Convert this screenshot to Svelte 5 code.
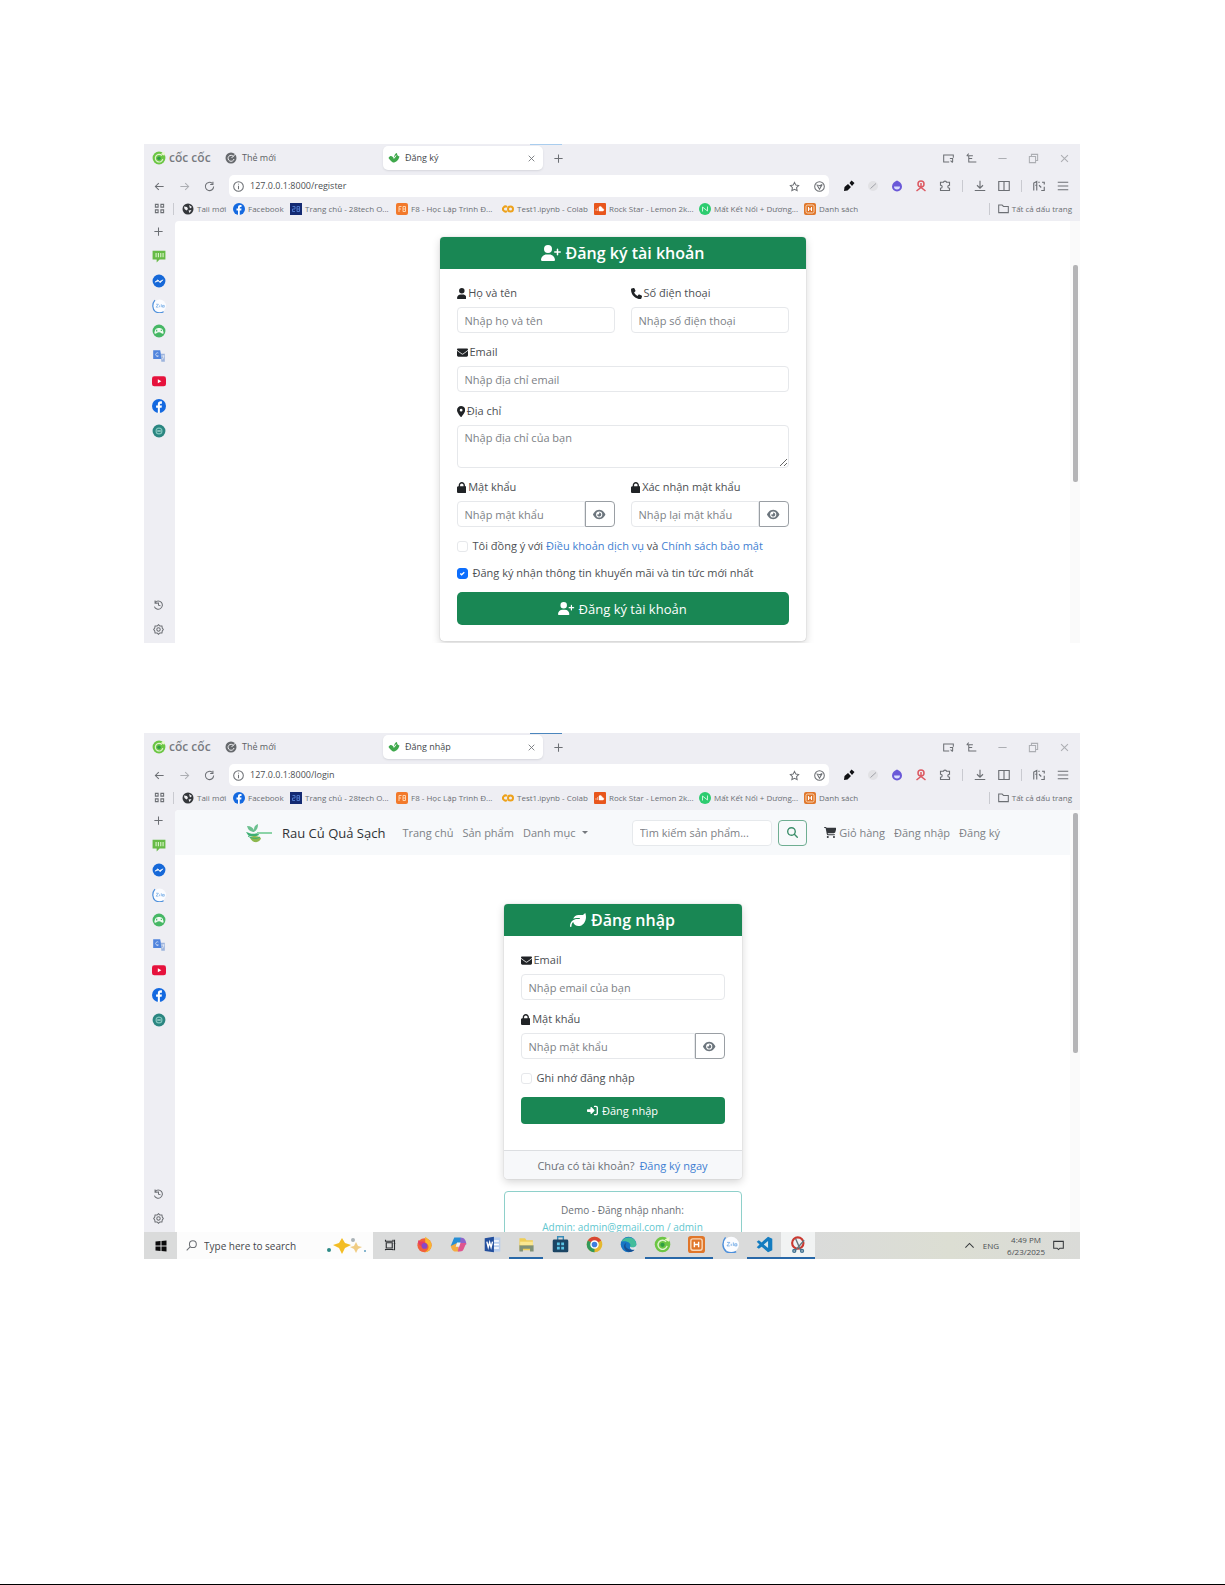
<script lang="ts">
    import type { Snippet } from "svelte";

    // solid glyphs: [viewBox width, path], all on a 512 high box
    const glyphs: Record<string, [number, string]> = {
        user: [448, "M224 256A128 128 0 1 0 224 0a128 128 0 1 0 0 256zm-45.7 48C79.8 304 0 383.8 0 482.3C0 498.7 13.3 512 29.7 512l388.6 0c16.4 0 29.7-13.3 29.7-29.7C448 383.8 368.2 304 269.7 304l-91.4 0z"],
        userPlus: [640, "M96 128a128 128 0 1 1 256 0A128 128 0 1 1 96 128zM0 482.3C0 383.8 79.8 304 178.3 304l91.4 0C368.2 304 448 383.8 448 482.3c0 16.4-13.3 29.7-29.7 29.7L29.7 512C13.3 512 0 498.7 0 482.3zM504 312l0-64-64 0c-13.3 0-24-10.7-24-24s10.7-24 24-24l64 0 0-64c0-13.3 10.7-24 24-24s24 10.7 24 24l0 64 64 0c13.3 0 24 10.7 24 24s-10.7 24-24 24l-64 0 0 64c0 13.3-10.7 24-24 24s-24-10.7-24-24z"],
        phone: [512, "M164.9 24.6c-7.7-18.6-28-28.5-47.4-23.2l-88 24C12.1 30.2 0 46 0 64C0 311.4 200.6 512 448 512c18 0 33.8-12.1 38.6-29.5l24-88c5.3-19.4-4.6-39.7-23.2-47.4l-96-40c-16.3-6.8-35.2-2.1-46.3 11.6L304.7 368C234.3 334.7 177.3 277.7 144 207.3L193.3 167c13.7-11.2 18.4-30 11.6-46.3l-40-96z"],
        envelope: [512, "M48 64C21.5 64 0 85.5 0 112c0 15.1 7.1 29.3 19.2 38.4L236.8 313.6c11.4 8.5 27 8.5 38.4 0L492.8 150.4c12.1-9.1 19.2-23.3 19.2-38.4c0-26.5-21.5-48-48-48L48 64zM0 176L0 384c0 35.3 28.7 64 64 64l384 0c35.3 0 64-28.7 64-64l0-208L294.4 339.2c-22.8 17.1-54 17.1-76.8 0L0 176z"],
        pin: [384, "M215.7 499.2C267 435 384 279.4 384 192C384 86 298 0 192 0S0 86 0 192c0 87.4 117 243 168.3 307.2c12.3 15.3 35.1 15.3 47.4 0zM192 128a64 64 0 1 1 0 128 64 64 0 1 1 0-128z"],
        lock: [448, "M144 144l0 48 160 0 0-48c0-44.2-35.8-80-80-80s-80 35.8-80 80zM80 192l0-48C80 64.5 144.5 0 224 0s144 64.5 144 144l0 48 16 0c35.3 0 64 28.7 64 64l0 192c0 35.3-28.7 64-64 64L64 512c-35.3 0-64-28.7-64-64L0 256c0-35.3 28.7-64 64-64l16 0z"],
        eye: [576, "M288 32c-80.8 0-145.5 36.8-192.6 80.6C48.6 156 17.3 208 2.5 243.7c-3.3 7.9-3.3 16.7 0 24.6C17.3 304 48.6 356 95.4 399.4C142.5 443.2 207.2 480 288 480s145.5-36.8 192.6-80.6c46.8-43.5 78.1-95.4 93-131.1c3.3-7.9 3.3-16.7 0-24.6c-14.9-35.7-46.2-87.7-93-131.1C433.5 68.8 368.8 32 288 32zM144 256a144 144 0 1 1 288 0 144 144 0 1 1 -288 0zm144-64c0 35.3-28.7 64-64 64c-7.1 0-13.9-1.2-20.3-3.3c-5.5-1.8-11.9 1.6-11.7 7.4c.3 6.9 1.3 13.8 3.2 20.7c13.7 51.2 66.4 81.6 117.6 67.9s81.6-66.4 67.9-117.6c-11.1-41.5-47.8-69.4-88.6-71.1c-5.8-.2-9.2 6.1-7.4 11.7c2.1 6.4 3.3 13.2 3.3 20.3z"],
        leaf: [512, "M272 96c-78.6 0-145.1 51.5-167.7 122.5c33.6-17 71.5-26.5 111.7-26.5l88 0c8.8 0 16 7.2 16 16s-7.2 16-16 16l-88 0c-16.6 0-32.7 1.9-48.3 5.4c-25.9 5.9-49.9 16.4-71.4 30.7C38.3 298.8 0 364.9 0 440l0 16c0 13.3 10.7 24 24 24s24-10.7 24-24l0-16c0-48.7 20.7-92.5 53.8-123.2C121.6 392.3 190.3 448 272 448l1 0c132.1-.7 239-130.9 239-291.4c0-42.6-7.5-83.1-21.1-119.6c-2.6-6.9-12.7-6.6-16.2-.1C455.9 72.1 418.7 96 376 96L272 96z"],
        cart: [576, "M0 24C0 10.7 10.7 0 24 0L69.5 0c22 0 41.5 12.8 50.6 32l411 0c26.3 0 45.5 25 38.6 50.4l-41 152.3c-8.5 31.4-37 53.3-69.5 53.3l-288.5 0 5.4 28.5c2.2 11.3 12.1 19.5 23.6 19.5L488 336c13.3 0 24 10.7 24 24s-10.7 24-24 24l-288.3 0c-34.6 0-64.3-24.6-70.7-58.5L77.4 54.5c-.7-3.8-4-6.5-7.9-6.5L24 48C10.7 48 0 37.3 0 24zM128 464a48 48 0 1 1 96 0 48 48 0 1 1 -96 0zm336-48a48 48 0 1 1 0 96 48 48 0 1 1 0-96z"],
        search: [512, "M416 208c0 45.9-14.9 88.3-40 122.7L502.6 457.4c12.5 12.5 12.5 32.8 0 45.3s-32.8 12.5-45.3 0L330.7 376c-34.4 25.2-76.8 40-122.7 40C93.1 416 0 322.9 0 208S93.1 0 208 0S416 93.1 416 208zM208 352a144 144 0 1 0 0-288 144 144 0 1 0 0 288z"],
        signIn: [512, "M217.9 105.9L340.7 228.7c7.2 7.2 11.3 17.1 11.3 27.3s-4.1 20.1-11.3 27.3L217.9 406.1c-6.4 6.4-15 9.9-24 9.9c-18.7 0-33.9-15.2-33.9-33.9l0-62.1L32 320c-17.7 0-32-14.3-32-32l0-64c0-17.7 14.3-32 32-32l128 0 0-62.1c0-18.7 15.2-33.9 33.9-33.9c9 0 17.6 3.6 24 9.9zM352 416l64 0c17.7 0 32-14.3 32-32l0-256c0-17.7-14.3-32-32-32l-64 0c-17.7 0-32-14.3-32-32s14.3-32 32-32l64 0c53 0 96 43 96 96l0 256c0 53-43 96-96 96l-64 0c-17.7 0-32-14.3-32-32s14.3-32 32-32z"],
    };

    // thin line icons of the browser frame, on a 16 box
    const lines: Record<string, string> = {
        back: "M14 8H2M7 3L2 8l5 5",
        forward: "M2 8h12M9 3l5 5-5 5",
        reload: "M14 8a6 6 0 1 1-2-4.5M13 1v4H9",
        info: "M8 1a7 7 0 1 0 0 14a7 7 0 1 0 0-14M8 7v5M8 4v1",
        star: "M8 2l2 4 4 .6-3 3 .8 4.4L8 12l-3.8 2L5 9.6l-3-3L6 6z",
        shield: "M8 1a7 7 0 1 0 0 14a7 7 0 1 0 0-14M4 5l4 7 4-7M6 6l3 1 2-2",
        puzzle: "M2 3h4c0-2 4-2 4 0h4v4c-3 0-3 4 0 4v3H2v-3c3 0 3-4 0-4z",
        download: "M8 1v9M4 7l4 4 4-4M1 14h14",
        split: "M1 2h14v12H1zM8 2v12",
        devices: "M1 14V4l4-2v12M7 3h2M12 3h3v3M15 9v5h-4M8 7l3 3M3 7h2",
        menu: "M1 3h14M1 8h14M1 13h14",
        cast: "M9 13H1V3h14v4M10 8h4v5M11 11l3 3",
        pinTab: "M1 4h9M4 4v9h11M4 8h5M1 4l3-3",
        minimize: "M2 8h12",
        restore: "M2 5h9v9H2zM5 5V2h9v9h-3",
        close: "M3 3l10 10M13 3L3 13",
        plus: "M8 2v12M2 8h12",
        apps: "M2 2h4v4H2zM10 2h4v4h-4zM2 10h4v4H2zM10 10h4v4h-4z",
        folder: "M1 3h5l2 2h7v9H1z",
        history: "M3 2v4h4M3 5a6 6 0 1 1-1 6M8 5v4l3 1",
        gear: "M8 1l2 2 3 0 .5 3L15 8l-1.5 2L13 13l-3 0-2 2-2-2-3 0-.5-3L1 8l1.5-2L3 3l3 0zM8 5.5a2.5 2.5 0 1 0 0 5a2.5 2.5 0 1 0 0-5",
        taskView: "M3 5h8v7H3zM2 1v2h10V1M2 15v-1h10v1M14 1v14M13 6h2",
        find: "M10 1a5 5 0 1 0 0 10a5 5 0 1 0 0-10M6 10l-5 5",
        up: "M2 11l6-6 6 6",
        note: "M1 2h14v10h-5l-2 2-2-2H1z",
    };

    const bookmarks = [
        { icon: "globe", text: "Taii mới", width: 51 },
        { icon: "facebook", text: "Facebook", width: 57 },
        { icon: "tech", text: "Trang chủ - 28tech O...", width: 106 },
        { icon: "f8", text: "F8 - Học Lập Trình Đ...", width: 106 },
        { icon: "colab", text: "Test1.ipynb - Colab", width: 92 },
        { icon: "cloud", text: "Rock Star - Lemon 2k...", width: 105 },
        { icon: "music", text: "Mất Kết Nối + Dương...", width: 105 },
        { icon: "xampp", text: "Danh sách", width: 60 },
    ];

    const sideApps = ["chat", "messenger", "zalo", "game", "translate", "youtube", "facebook", "teal"];

    const tasks = [
        { icon: "firefox" },
        { icon: "copilot" },
        { icon: "word" },
        { icon: "explorer", open: true },
        { icon: "store" },
        { icon: "chrome" },
        { icon: "edge" },
        { icon: "coccoc", open: true },
        { icon: "xampp", open: true },
        { icon: "zalo" },
        { icon: "vscode", open: true },
        { icon: "snip", open: true, active: true },
    ];
</script>

{#snippet glyph(name: string)}
    <svg class="glyph" viewBox="0 0 {glyphs[name][0]} 512" aria-hidden="true"><path d={glyphs[name][1]} /></svg>
{/snippet}

{#snippet line(name: string)}
    <svg class="line" viewBox="0 0 16 16" aria-hidden="true"><path d={lines[name]} /></svg>
{/snippet}

{#snippet brand(name: string)}
    <svg class="brand" viewBox="0 0 24 24" aria-hidden="true">
        {#if name === "coccoc"}
            <circle cx="12" cy="12" r="11" fill="#6cc644" />
            <path d="M17 8a6.5 6.5 0 1 0 1.500 6" fill="none" stroke="#dff3cf" stroke-width="2" />
            <circle cx="12" cy="12.5" r="3" fill="#2f9e44" />
            <path d="M15 5l7-4-1 7z" fill="#e9f8c9" />
        {:else if name === "newtab"}
            <circle cx="12" cy="12" r="11" fill="#66696d" />
            <path d="M17 9a6 6 0 1 0 1 5M13 12l8-8" fill="none" stroke="#f2f2f5" stroke-width="2" />
        {:else if name === "sprout"}
            <path d="M1 12C5 5 9 8 12 13C12 6 14 3 18 2c0 4 1 6 5 7-2 7-6 12-13 12-3-1-6-5-9-9z" fill="#3fa84c" />
            <path d="M12 13l4-6" stroke="#fff" stroke-width="2" />
        {:else if name === "globe"}
            <circle cx="12" cy="12" r="11" fill="#34373b" />
            <path d="M4 7l6 1 2 4-3 3-4-3zM14 4l6 4-4 3zM13 15l6-1-4 6z" fill="#f2f2f5" />
        {:else if name === "facebook"}
            <circle cx="12" cy="12" r="12" fill="#1469e0" />
            <path d="M10 24v-9H7v-4h3V9c0-3.5 2-5 5-5h2v4h-2c-1 0-1.5.5-1.5 1.5V11H17l-.5 4h-3v9z" fill="#fff" />
        {:else if name === "tech"}
            <rect width="24" height="24" fill="#142a72" />
            <path d="M5 7h5v5H5v5h5M14 7h5v10h-5zM14 12h5" fill="none" stroke="#4d76c9" stroke-width="2" />
        {:else if name === "f8"}
            <rect width="24" height="24" rx="4" fill="#f2792b" />
            <path d="M6 18V7h5M6 12h4M14 7h5v10h-5zM14 12h5" fill="none" stroke="#ffd4ad" stroke-width="2" />
        {:else if name === "colab"}
            <g fill="none" stroke="#eda21c" stroke-width="4">
                <path d="M10 8a5 5 0 1 0 0 8" />
                <circle cx="17" cy="12" r="5" />
            </g>
        {:else if name === "cloud"}
            <rect width="24" height="24" rx="2" fill="#e8561c" />
            <path d="M4 16v-4M7 16v-6M10 16V8c4-2 6 0 6 3 4-1 5 5 1 5z" fill="#fff" stroke="#fff" />
        {:else if name === "music"}
            <circle cx="12" cy="12" r="12" fill="#2dcc70" />
            <path d="M7 17V8l10 8V7" fill="none" stroke="#c9f5da" stroke-width="2" />
        {:else if name === "xampp"}
            <rect width="24" height="24" rx="4" fill="#e0762a" />
            <rect x="4" y="4" width="16" height="16" rx="3" fill="none" stroke="#f8d6b6" stroke-width="2" />
            <path d="M9 8v8M15 8v8M9 12h6" fill="none" stroke="#fff" stroke-width="2" />
        {:else if name === "chat"}
            <path d="M1 3h22v15H13l-5 5v-5H1z" fill="#66bb46" />
            <path d="M7 7v7M11 7v7M15 7v7M19 7v7" stroke="#d4f2c4" stroke-width="2" />
        {:else if name === "messenger"}
            <circle cx="12" cy="12" r="11" fill="#1668d8" />
            <path d="M5 14l5-4 3 3 6-3-5 5-3-3z" fill="#fff" stroke="#fff" />
        {:else if name === "zalo"}
            <circle cx="13" cy="12" r="11" fill="#fbfcff" />
            <path d="M5 2C0 8 0 17 6 22c4 2 10 2 14 0" fill="none" stroke="#4b8fdc" stroke-width="2" />
            <path d="M7 9h4l-4 5h4M13 11v3M16 9v5M18 11h3v3h-3z" fill="none" stroke="#5599e0" stroke-width="1" />
        {:else if name === "game"}
            <circle cx="12" cy="12" r="11" fill="#46b765" />
            <path d="M4 16c1-8 4-9 8-9s7 1 8 9c-3 2-4-2-8-2s-5 4-8 2z" fill="#eefaf0" />
            <path d="M8 10v3M15 11h2" stroke="#46b765" stroke-width="2" />
        {:else if name === "translate"}
            <path d="M2 2h12l3 15H2z" fill="#5084dd" />
            <path d="M15 8h7v14h-6z" fill="#9db4dd" />
            <path d="M11 7a3 3 0 1 0 0 5H8M16 12h5M20 11c0 4-1 6-3 7" fill="none" stroke="#fff" stroke-width="1" />
        {:else if name === "youtube"}
            <rect y="4" width="24" height="17" rx="4" fill="#e6123c" />
            <path d="M10 9l6 3.5-6 3.5z" fill="#fff" />
        {:else if name === "teal"}
            <circle cx="12" cy="12" r="11" fill="#2b8681" />
            <circle cx="12" cy="12" r="5" fill="none" stroke="#80c6bd" stroke-width="2" />
            <path d="M9 12h6" stroke="#bce6df" stroke-width="2" />
        {:else if name === "pen"}
            <path d="M2 22l1-8 7-6 6 6-7 7zM13 6l4-5 6 5-5 6z" fill="#101114" />
        {:else if name === "pencil"}
            <circle cx="12" cy="12" r="10" fill="#e2e2e5" />
            <path d="M7 17L18 7" stroke="#a0a1a8" stroke-width="2" />
        {:else if name === "drop"}
            <path d="M12 1c5 2 10 6 10 12a10 10 0 0 1-20 0C2 7 7 3 12 1z" fill="#6a58d8" />
            <path d="M6 13h12a6 6 0 0 1-12 0z" fill="#d9ddff" />
        {:else if name === "bot"}
            <circle cx="12" cy="8" r="6" fill="none" stroke="#dc5962" stroke-width="3" />
            <path d="M12 6v11M3 22l9-7 9 7" fill="none" stroke="#dc5962" stroke-width="3" />
        {:else if name === "windows"}
            <path d="M1 3l10-1v9H1zM13 2l10-1v10H13zM1 13h10v9L1 21zM13 13h10v10l-10-1z" fill="#0b0b0c" />
        {:else if name === "firefox"}
            <circle cx="12" cy="13" r="10" fill="#f0603c" />
            <path d="M13 1c4 3 9 6 9 12 0 5-4 10-10 10 8-4 7-11 1-14z" fill="#f9b62f" />
            <path d="M3 6l3 2c6-1 9 2 8 6-2 3-6 3-7 0C3 12 3 9 3 6z" fill="#e33b69" />
            <circle cx="12" cy="14" r="4" fill="#8748c9" />
        {:else if name === "copilot"}
            <path d="M6 2h9l3 8-6 4H1z" fill="#268ed5" />
            <path d="M15 2c5 0 8 4 8 10h-9z" fill="#8c64cd" />
            <path d="M1 14l9-4 3 12H8c-4 0-6-4-7-8z" fill="#f3ac42" />
            <path d="M13 10h10l-4 9c-1 3-4 3-8 3z" fill="#df568f" />
            <path d="M10 9h5l-2 6H8z" fill="#eef0f0" />
        {:else if name === "word"}
            <path d="M9 2h14v20H9z" fill="#b9ceec" />
            <path d="M12 7h9M12 12h9M12 17h9" stroke="#fff" stroke-width="2" />
            <path d="M1 3l13-2v22L1 21z" fill="#234f9d" />
            <path d="M4 8l2 8 2-7 2 7 2-8" fill="none" stroke="#fff" stroke-width="2" />
        {:else if name === "explorer"}
            <path d="M2 3h8l2 3h9v14H2z" fill="#f0ce57" />
            <path d="M2 13h20v9h-5v-4H7v4H2z" fill="#809177" />
            <path d="M3 8h18v5H3z" fill="#fae792" />
        {:else if name === "store"}
            <path d="M8 6V1h8v5" fill="none" stroke="#398cb9" stroke-width="2" />
            <rect x="1" y="5" width="22" height="18" rx="2" fill="#1b4564" />
            <path d="M7 9h4v4H7zM13 9h4v4h-4zM7 15h4v4H7zM13 15h4v4h-4z" fill="#5ac3e4" />
        {:else if name === "chrome"}
            <circle cx="12" cy="12" r="11" fill="#e5b82f" />
            <path d="M12 12L2.5 6.5A11 11 0 0 1 21.5 6.5z" fill="#d84735" />
            <path d="M12 12L2.5 6.5A11 11 0 0 0 12 23z" fill="#31985b" />
            <circle cx="12" cy="12" r="5" fill="#3f7ee0" stroke="#fff" stroke-width="2" />
        {:else if name === "edge"}
            <circle cx="12" cy="12" r="11" fill="#1676c5" />
            <path d="M2 8C6-1 23 0 23 12c0 4-5 5-9 3 3-5-5-9-12-7z" fill="#43bd9b" />
            <path d="M9 10c-4 5 2 11 11 9 2 0-4 5-9 3-5-1-8-10-2-12z" fill="#174f91" />
            <path d="M14 15c4 2 8 1 9-2v6c-4 1-9 1-9-4z" fill="#e4e8e7" />
        {:else if name === "vscode"}
            <path d="M17 1l6 3v16l-6 3-9-8-4 3-3-2 4-4-4-4 3-2 4 3z" fill="#147cc0" />
            <path d="M17 7v10l-6-5z" fill="#dae7ed" />
        {:else if name === "snip"}
            <circle cx="11" cy="10" r="8" fill="#eef2f4" stroke="#ca3931" stroke-width="3" />
            <path d="M8 4l7 16M20 6L7 21" stroke="#66757d" stroke-width="2" />
            <circle cx="6" cy="21" r="2" fill="none" stroke="#3f7191" stroke-width="2" />
            <circle cx="17" cy="21" r="2" fill="none" stroke="#3f7191" stroke-width="2" />
        {/if}
    </svg>
{/snippet}

{#snippet browser(title: string, path: string, page: Snippet, kind: string)}
    <section class="browser {kind}">
        <div class="tabs">
            <div class="logo">{@render brand("coccoc")}<span>cốc cốc</span></div>
            <div class="tab">{@render brand("newtab")}<span>Thẻ mới</span></div>
            <div class="tab current">
                {@render brand("sprout")}<span>{title}</span>
                <button aria-label="Đóng thẻ">{@render line("close")}</button>
            </div>
            <button class="new-tab" aria-label="Thêm thẻ">{@render line("plus")}</button>
            <div class="window-buttons">
                {#each ["cast", "pinTab", "minimize", "restore", "close"] as name}
                    <button aria-label={name}>{@render line(name)}</button>
                {/each}
            </div>
        </div>

        <div class="toolbar">
            <button aria-label="back">{@render line("back")}</button>
            <button class="faded" aria-label="forward">{@render line("forward")}</button>
            <button aria-label="reload">{@render line("reload")}</button>
            <div class="address">
                {@render line("info")}
                <input type="text" aria-label="URL" value="127.0.0.1:8000/{path}" />
                <button aria-label="star">{@render line("star")}</button>
                <button aria-label="shield">{@render line("shield")}</button>
            </div>
            <div class="extensions">
                {#each ["pen", "pencil", "drop", "bot"] as name}
                    <button aria-label={name}>{@render brand(name)}</button>
                {/each}
                <button aria-label="puzzle">{@render line("puzzle")}</button>
                <i></i>
                <button aria-label="download">{@render line("download")}</button>
                <button aria-label="split">{@render line("split")}</button>
                <i></i>
                <button aria-label="devices">{@render line("devices")}</button>
                <button aria-label="menu">{@render line("menu")}</button>
            </div>
        </div>

        <nav class="bookmarks">
            <button aria-label="apps">{@render line("apps")}</button>
            <i></i>
            {#each bookmarks as mark}
                <a href="#top" style="width: {mark.width}px">{@render brand(mark.icon)}<span>{mark.text}</span></a>
            {/each}
            <i class="push"></i>
            <a href="#top">{@render line("folder")}<span>Tất cả dấu trang</span></a>
        </nav>

        <div class="body">
            <aside>
                <button aria-label="add">{@render line("plus")}</button>
                {#each sideApps as app}
                    <button aria-label={app}>{@render brand(app)}</button>
                {/each}
                <button class="bottom" aria-label="history">{@render line("history")}</button>
                <button aria-label="settings">{@render line("gear")}</button>
            </aside>
            <main>{@render page()}</main>
            <div class="scroll"><div class="thumb"></div></div>
        </div>
    </section>
{/snippet}

{#snippet password(id: string, label: string, placeholder: string)}
    <div class="field">
        <label for={id}>{@render glyph("lock")}{label}</label>
        <div class="group">
            <input {id} type="password" {placeholder} />
            <button type="button" aria-label="Hiện mật khẩu">{@render glyph("eye")}</button>
        </div>
    </div>
{/snippet}

{#snippet registerPage()}
    <div class="card register-card">
        <h4>{@render glyph("userPlus")}Đăng ký tài khoản</h4>
        <form>
            <div class="row">
                <div class="field">
                    <label for="name">{@render glyph("user")}Họ và tên</label>
                    <input id="name" type="text" placeholder="Nhập họ và tên" />
                </div>
                <div class="field">
                    <label for="phone">{@render glyph("phone")}Số điện thoại</label>
                    <input id="phone" type="tel" placeholder="Nhập số điện thoại" />
                </div>
            </div>
            <div class="field">
                <label for="email">{@render glyph("envelope")}Email</label>
                <input id="email" type="email" placeholder="Nhập địa chỉ email" />
            </div>
            <div class="field">
                <label for="address">{@render glyph("pin")}Địa chỉ</label>
                <textarea id="address" placeholder="Nhập địa chỉ của bạn"></textarea>
            </div>
            <div class="row">
                {@render password("pass", "Mật khẩu", "Nhập mật khẩu")}
                {@render password("confirm", "Xác nhận mật khẩu", "Nhập lại mật khẩu")}
            </div>
            <div class="check">
                <input id="terms" type="checkbox" />
                <label for="terms">Tôi đồng ý với <a href="#terms">Điều khoản dịch vụ</a> và <a href="#privacy">Chính sách bảo mật</a></label>
            </div>
            <div class="check">
                <input id="news" type="checkbox" checked />
                <label for="news">Đăng ký nhận thông tin khuyến mãi và tin tức mới nhất</label>
            </div>
            <button class="submit large" type="button">{@render glyph("userPlus")}Đăng ký tài khoản</button>
        </form>
    </div>
{/snippet}

{#snippet loginPage()}
    <nav class="navbar">
        <a class="shop" href="#top">
            <svg viewBox="0 0 28 20" aria-hidden="true">
                <path d="M8 9C5 8 3 7 2 3c4 0 6 2 7 4 0-3 1-5 4-6 0 4-1 6-4 8z" fill="#6cc08f" />
                <path d="M1 9c4 1 6 3 12 1l1 2c-4 2-9 2-11 0z" fill="#3eb073" />
                <path d="M12 9h15v2H12z" fill="#8bd3a7" />
                <path d="M5 15c3-3 8-2 11 0-1 5-8 6-11 0z" fill="#8db84e" />
                <path d="M3 13c4 3 9 3 12 1" fill="none" stroke="#3eb073" />
            </svg>
            <span>Rau Củ Quả Sạch</span>
        </a>
        <a href="#top">Trang chủ</a>
        <a href="#top">Sản phẩm</a>
        <a class="drop" href="#top">Danh mục</a>
        <form class="search">
            <input type="text" aria-label="Tìm kiếm" placeholder="Tìm kiếm sản phẩm..." />
            <button type="button" aria-label="Tìm">{@render glyph("search")}</button>
        </form>
        <a href="#top">{@render glyph("cart")}Giỏ hàng</a>
        <a href="#top">Đăng nhập</a>
        <a href="#top">Đăng ký</a>
    </nav>

    <div class="card login-card">
        <h4>{@render glyph("leaf")}Đăng nhập</h4>
        <form>
            <div class="field">
                <label for="login-email">{@render glyph("envelope")}Email</label>
                <input id="login-email" type="email" placeholder="Nhập email của bạn" />
            </div>
            {@render password("login-pass", "Mật khẩu", "Nhập mật khẩu")}
            <div class="check">
                <input id="remember" type="checkbox" />
                <label for="remember">Ghi nhớ đăng nhập</label>
            </div>
            <button class="submit" type="button">{@render glyph("signIn")}Đăng nhập</button>
        </form>
        <footer>Chưa có tài khoản? <a href="#register">Đăng ký ngay</a></footer>
    </div>
    <div class="demo">
        <p>Demo - Đăng nhập nhanh:</p>
        <p class="account">Admin: admin@gmail.com / admin</p>
    </div>
{/snippet}

<div class="paper">
    {@render browser("Đăng ký", "register", registerPage, "register")}

    <div class="desktop">
        {@render browser("Đăng nhập", "login", loginPage, "login")}
        <div class="taskbar">
            <button class="start" aria-label="Start">{@render brand("windows")}</button>
            <label class="find">
                {@render line("find")}
                <input type="text" placeholder="Type here to search" />
                <svg class="sparkles" viewBox="0 0 42 18" aria-hidden="true">
                    <path d="M16 1l3 5 6 2-6 3-3 6-3-6-6-3 6-2z" fill="#f3bd25" />
                    <path d="M30 5l2 4 4 1-4 2-2 4-2-4-4-2 4-1z" fill="#f0cc83" />
                    <circle cx="3" cy="13" r="2" fill="#2e8b87" />
                    <circle cx="27" cy="3" r="2" fill="#aab3b7" />
                    <circle cx="39" cy="14" r="1" fill="#5f9fc0" />
                </svg>
            </label>
            <button class="task" aria-label="Task View">{@render line("taskView")}</button>
            {#each tasks as task}
                <button class="task" class:open={task.open} class:active={task.active} aria-label={task.icon}>
                    {@render brand(task.icon)}
                </button>
            {/each}
            <div class="tray">
                {@render line("up")}
                <span>ENG</span>
                <div class="clock"><span>4:49 PM</span><span>6/23/2025</span></div>
                {@render line("note")}
            </div>
        </div>
    </div>
</div>

<style>
    :global(body) {
        margin: 0;
        background: #fff;
    }

    .paper {
        --green: #198754;
        --chrome: #eeeef3;
        box-sizing: border-box;
        min-height: 100vh;
        padding: 144px 145px 0 144px;
        border-bottom: 1px solid #000;
        font-family: "Open Sans", "Noto Sans", sans-serif;
        font-size: 11px;
        line-height: 16px;
        color: #4c4f53;
    }
    .paper :global(*) {
        box-sizing: border-box;
    }

    button,
    input,
    textarea {
        font: inherit;
        color: inherit;
        margin: 0;
        padding: 0;
        border: none;
        background: none;
        outline: none;
    }
    button {
        display: flex;
        align-items: center;
        justify-content: center;
        flex: none;
    }
    a {
        color: inherit;
        text-decoration: none;
    }
    svg {
        display: block;
        flex: none;
    }
    .glyph {
        height: 11px;
        fill: currentColor;
    }
    .line {
        width: 11px;
        height: 11px;
        fill: none;
        stroke: #6c6f74;
        stroke-width: 1.5;
    }
    .brand {
        width: 12px;
        height: 12px;
    }

    /* browser frame */
    .browser {
        background: var(--chrome);
        overflow: hidden;
    }
    .tabs {
        display: flex;
        align-items: center;
        height: 28px;
        padding: 0 10px 0 8px;
        font-size: 9px;
        color: #5c5f64;
        background: linear-gradient(#a9cdee, #a9cdee) 386px 0 / 32px 1px no-repeat;
    }
    .login .tabs {
        background-image: linear-gradient(#4b86bd, #4b86bd);
    }
    .logo {
        display: flex;
        align-items: center;
        gap: 3px;
        width: 73px;
        font-size: 12px;
        font-weight: 600;
        color: #777a7f;
    }
    .logo .brand {
        width: 14px;
        height: 14px;
    }
    .tab {
        display: flex;
        align-items: center;
        gap: 5px;
        width: 158px;
    }
    .tab.current {
        width: 160px;
        height: 24px;
        padding: 0 7px 0 5px;
        border-radius: 5px;
        color: #44474b;
        background: #fff;
        box-shadow: 0 1px 2px #d5d6dc;
    }
    .tab.current button {
        margin-left: auto;
    }
    .tab .line {
        width: 9px;
        height: 9px;
    }
    .new-tab {
        margin-left: 10px;
    }
    .window-buttons {
        display: flex;
        gap: 20px;
        margin-left: auto;
    }
    .window-buttons button:nth-child(n + 3) {
        opacity: 0.5;
    }
    .window-buttons button:nth-child(2) {
        margin-left: -8px;
    }

    .toolbar {
        display: flex;
        align-items: center;
        gap: 14px;
        height: 28px;
        padding: 0 11px 0 10px;
    }
    .faded {
        opacity: 0.5;
    }
    .address {
        display: flex;
        align-items: center;
        gap: 14px;
        flex: 1;
        height: 22px;
        padding: 0 4px;
        border-radius: 5px;
        background: #fff;
    }
    .address input {
        flex: 1;
        min-width: 0;
        margin-left: -8px;
        font-size: 9px;
    }
    .extensions {
        display: flex;
        align-items: center;
        gap: 12px;
    }
    .extensions .line {
        width: 12px;
        height: 12px;
    }
    i {
        width: 1px;
        height: 12px;
        background: #c9cad0;
    }
    .extensions i {
        margin: 0 -1px;
    }

    .bookmarks {
        display: flex;
        align-items: center;
        height: 17px;
        margin-bottom: 4px;
        padding: 0 8px 0 10px;
        font-size: 8px;
        color: #6c6f74;
    }
    .bookmarks i {
        margin: 0 8px;
    }
    .bookmarks .push {
        margin-left: auto;
    }
    .bookmarks a {
        display: flex;
        align-items: center;
        gap: 3px;
        flex: none;
        white-space: nowrap;
    }

    .body {
        display: flex;
        height: 422px;
    }
    aside {
        display: flex;
        flex-direction: column;
        gap: 5px;
        width: 31px;
        padding-bottom: 4px;
    }
    aside button {
        width: 29px;
        height: 20px;
    }
    aside .brand {
        width: 14px;
        height: 14px;
    }
    aside .bottom {
        margin-top: auto;
    }
    main {
        flex: 1;
        min-width: 0;
        overflow: hidden;
        border-top-left-radius: 4px;
        background: #fff;
    }
    .scroll {
        width: 10px;
        padding: 44px 3px 0;
        background: #fafafa;
    }
    .login .scroll {
        padding-top: 3px;
    }
    .thumb {
        width: 5px;
        height: 217px;
        border-radius: 2px;
        background: #b4b4b6;
    }
    .login .thumb {
        height: 240px;
    }

    /* forms */
    .card {
        margin: 16px auto 0;
        border-radius: 4px;
        background: #fff;
        box-shadow: 0 3px 9px #0000002b, 0 0 1px #00000055;
    }
    .register-card {
        width: 366px;
    }
    .login-card {
        width: 238px;
        margin-top: 49px;
    }
    h4 {
        display: flex;
        align-items: center;
        justify-content: center;
        gap: 5px;
        height: 32px;
        margin: 0;
        border-radius: 4px 4px 0 0;
        font-size: 16px;
        font-weight: 600;
        color: #fff;
        background: var(--green);
    }
    h4 .glyph {
        height: 16px;
    }
    .card form {
        padding: 16px 17px;
    }
    .login-card form {
        padding-bottom: 26px;
    }
    .row {
        display: grid;
        grid-template-columns: 1fr 1fr;
        gap: 16px;
    }
    .field {
        margin-bottom: 11px;
    }
    .field label {
        display: flex;
        align-items: center;
        gap: 2px;
        height: 16px;
        margin-bottom: 6px;
    }
    .field .glyph {
        color: #202326;
    }
    .field input,
    textarea {
        display: block;
        width: 100%;
        height: 26px;
        padding: 0 7px;
        border: 1px solid #e6e8eb;
        border-radius: 4px;
    }
    textarea {
        height: 43px;
        padding: 4px 7px;
    }
    input::placeholder,
    textarea::placeholder {
        color: #7d8186;
        opacity: 1;
    }
    .group {
        display: flex;
    }
    .group input {
        flex: 1;
        min-width: 0;
        border-radius: 4px 0 0 4px;
    }
    .group button {
        width: 30px;
        border: 1px solid #9a9fa4;
        border-radius: 0 4px 4px 0;
    }
    .group .glyph {
        color: #6c757d;
    }
    .check {
        display: flex;
        align-items: center;
        gap: 5px;
        height: 16px;
        margin-bottom: 11px;
        white-space: nowrap;
    }
    .check input {
        appearance: none;
        width: 11px;
        height: 11px;
        border: 1px solid #e6e8eb;
        border-radius: 3px;
    }
    .check input:checked {
        border-color: #0d6efd;
        background: #0d6efd url("data:image/svg+xml,%3Csvg xmlns='http://www.w3.org/2000/svg' viewBox='0 0 20 20'%3E%3Cpath fill='none' stroke='%23fff' stroke-width='3' d='M5 10l3 3 6-6'/%3E%3C/svg%3E");
    }
    .check a,
    footer a {
        color: #3f7fd2;
    }
    .submit {
        gap: 4px;
        width: 100%;
        height: 27px;
        border-radius: 4px;
        color: #fff;
        background: var(--green);
    }
    .submit.large {
        height: 33px;
        border-radius: 5px;
        font-size: 13px;
    }
    .large .glyph {
        height: 13px;
    }
    footer {
        height: 29px;
        border-top: 1px solid #dcdee1;
        border-radius: 0 0 4px 4px;
        line-height: 29px;
        text-align: center;
        color: #6b7076;
        background: #f7f8fa;
    }
    footer a {
        margin-left: 2px;
    }
    .demo {
        width: 238px;
        margin: 12px auto 0;
        padding: 10px;
        border: 1px solid #8ed0ca;
        border-radius: 4px;
        font-size: 10px;
        line-height: 17px;
        text-align: center;
        color: #6b7076;
    }
    .demo p {
        margin: 0;
        white-space: nowrap;
    }
    .demo .account {
        color: #63c7cf;
    }

    .navbar {
        display: flex;
        align-items: center;
        gap: 9px;
        height: 45px;
        padding: 0 70px;
        white-space: nowrap;
        color: #7d8186;
        background: #f7f9fb;
    }
    .navbar a {
        display: flex;
        align-items: center;
        gap: 3px;
    }
    .navbar .shop {
        gap: 9px;
        margin-right: 8px;
        font-size: 13px;
        color: #2f3235;
    }
    .shop svg {
        width: 28px;
        height: 20px;
    }
    .navbar .glyph {
        color: #34383c;
    }
    .drop::after {
        content: "";
        margin-left: 3px;
        border: 3px solid transparent;
        border-top-color: #74787d;
        border-bottom: none;
    }
    .search {
        display: flex;
        gap: 6px;
        margin: 0 8px 0 auto;
    }
    .search input {
        width: 140px;
        height: 26px;
        padding: 0 7px;
        border: 1px solid #e6e9ec;
        border-radius: 4px;
        background: #fff;
    }
    .search button {
        width: 29px;
        height: 26px;
        border: 1px solid #6fae92;
        border-radius: 4px;
    }
    .navbar .search .glyph {
        color: #3c8f6b;
    }

    /* windows desktop */
    .desktop {
        margin-top: 90px;
    }
    .taskbar {
        display: flex;
        height: 27px;
        background: linear-gradient(90deg, #dadbdb 0 70%, #dcded3 86%, #dadbd8);
    }
    .start {
        width: 33px;
    }
    .find {
        display: flex;
        align-items: center;
        gap: 7px;
        width: 196px;
        padding: 0 5px 0 9px;
        background: #fcfcfc;
    }
    .find input {
        flex: 1;
        min-width: 0;
        font-size: 10px;
    }
    .find input::placeholder {
        color: #44474b;
    }
    .sparkles {
        width: 42px;
        height: 18px;
    }
    .task {
        width: 34px;
        border-bottom: 2px solid transparent;
    }
    .task .line {
        width: 12px;
        height: 12px;
        stroke: #2b2e31;
    }
    .task .brand {
        width: 17px;
        height: 17px;
    }
    .task.open {
        border-bottom-color: #2868a8;
    }
    .task.active {
        background: #f1f3f3;
    }
    .tray {
        display: flex;
        align-items: center;
        gap: 8px;
        margin-left: auto;
        padding-right: 16px;
        font-size: 8px;
    }
    .tray .line {
        stroke: #36393c;
    }
    .clock {
        display: flex;
        flex-direction: column;
        align-items: center;
        line-height: 12px;
    }
</style>
